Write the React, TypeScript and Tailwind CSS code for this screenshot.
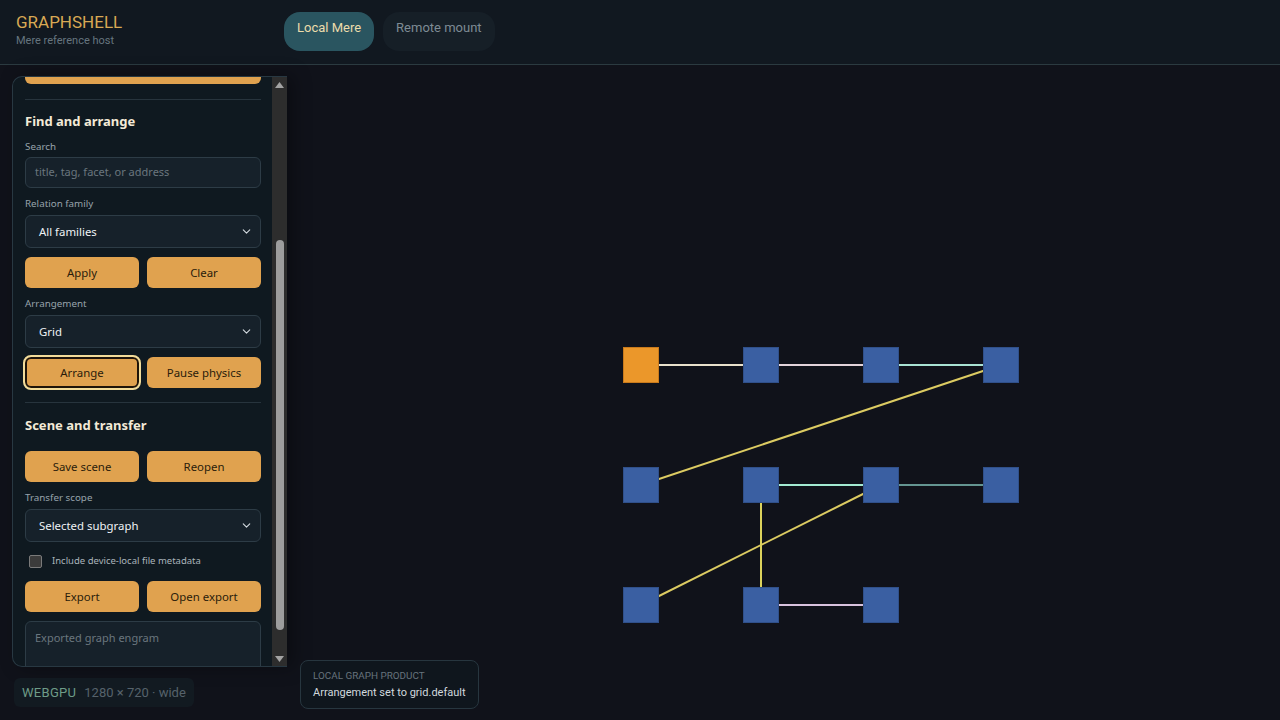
import { ChevronDown } from 'lucide-react';

const COLS = [641, 761, 881, 1001];
const ROWS = [300, 420, 540];

const nodes = [
  { c: 0, r: 0, focus: true },
  { c: 1, r: 0 }, { c: 2, r: 0 }, { c: 3, r: 0 },
  { c: 0, r: 1 }, { c: 1, r: 1 }, { c: 2, r: 1 }, { c: 3, r: 1 },
  { c: 0, r: 2 }, { c: 1, r: 2 }, { c: 2, r: 2 },
];

const edges = [
  { a: [0, 0], b: [1, 0], color: '#e9e1cc', w: 2.2 },
  { a: [1, 0], b: [2, 0], color: '#e3d3da', w: 2 },
  { a: [2, 0], b: [3, 0], color: '#a9e2d3', w: 2 },
  { a: [3, 0], b: [0, 1], color: '#dccb62', w: 2 },
  { a: [1, 1], b: [2, 1], color: '#a3ead2', w: 2.2 },
  { a: [2, 1], b: [3, 1], color: '#80c2ba', w: 1.6 },
  { a: [2, 1], b: [0, 2], color: '#dccb62', w: 2 },
  { a: [1, 1], b: [1, 2], color: '#dcd25c', w: 2 },
  { a: [1, 2], b: [2, 2], color: '#d8c2de', w: 2 },
];

const font = { fontFamily: '"Noto Sans", "Open Sans", sans-serif' };
const roboto = { fontFamily: 'Roboto, "Liberation Sans", sans-serif' };

function OrangeButton({ children, focused }: { children: React.ReactNode; focused?: boolean }) {
  return (
    <button
      className={`h-[31px] flex-1 rounded-[6px] bg-[#e0a24f] text-[11.4px] text-[#2a1c0b] ${
        focused ? 'outline-2 outline-[#f2dc9a] shadow-[inset_0_0_0_2px_#1f150a]' : ''
      }`}
    >
      {children}
    </button>
  );
}

function Label({ children }: { children: React.ReactNode }) {
  return <div className="text-[9.8px] leading-[14px] text-[#97a3ab]">{children}</div>;
}

function Select({ value }: { value: string }) {
  return (
    <div className="mt-1 flex h-[33px] items-center justify-between rounded-[6px] border border-[#2d3c46] bg-[#16212a] pl-[13px] pr-[7px] text-[11.4px] text-[#eef2f4]">
      <span>{value}</span>
      <ChevronDown className="h-[13px] w-[13px] text-[#d3dadf]" strokeWidth={2} />
    </div>
  );
}

function Scrollbar() {
  return (
    <div className="flex w-[15px] shrink-0 flex-col items-center bg-[#2d2d2d]">
      <div className="flex h-[15px] w-full items-center justify-center">
        <svg width="9" height="6" viewBox="0 0 9 6">
          <polygon points="4.5,0 9,6 0,6" fill="#a3a3a3" />
        </svg>
      </div>
      <div className="flex w-full flex-1 flex-col items-center">
        <div className="mt-[148px] h-[390px] w-[8px] rounded-full bg-[#9d9d9d]" />
      </div>
      <div className="flex h-[15px] w-full items-center justify-center">
        <svg width="9" height="6" viewBox="0 0 9 6">
          <polygon points="0,0 9,0 4.5,6" fill="#a3a3a3" />
        </svg>
      </div>
    </div>
  );
}

function Panel() {
  return (
    <div
      className="absolute left-[12px] top-[11px] flex h-[591px] w-[275px] overflow-hidden rounded-l-[10px] border border-r-0 border-[#283842] bg-[#0f1920] shadow-[6px_0_18px_rgba(0,0,0,0.35)]"
      style={font}
    >
      <div className="flex-1 overflow-hidden pl-[12px] pr-[11px]">
        {/* bottom of the button scrolled out above */}
        <div className="h-[7px] rounded-b-[6px] bg-[#e0a24f]" />
        <div className="mt-[15px] h-px bg-[#27343d]" />

        {/* Find and arrange */}
        <div className="flex flex-col gap-[9px] pb-[14px] pt-[11px]">
          <h3 className="text-[13px] font-bold leading-[20px] text-[#f3ead7]">Find and arrange</h3>
          <div>
            <Label>Search</Label>
            <div className="mt-[3px] flex h-[31px] items-center rounded-[6px] border border-[#2d3c46] bg-[#16212a] px-[9px] text-[11px] text-[#6a767e]">
              title, tag, facet, or address
            </div>
          </div>
          <div>
            <Label>Relation family</Label>
            <Select value="All families" />
          </div>
          <div className="flex gap-2">
            <OrangeButton>Apply</OrangeButton>
            <OrangeButton>Clear</OrangeButton>
          </div>
          <div>
            <Label>Arrangement</Label>
            <Select value="Grid" />
          </div>
          <div className="flex gap-2">
            <OrangeButton focused>Arrange</OrangeButton>
            <OrangeButton>Pause physics</OrangeButton>
          </div>
        </div>

        <div className="h-px bg-[#27343d]" />

        {/* Scene and transfer */}
        <div className="flex flex-col gap-[9px] pb-[12px] pt-[12px]">
          <h3 className="text-[13px] font-bold leading-[20px] text-[#f3ead7]">Scene and transfer</h3>
          <div className="mt-[7px] flex gap-2">
            <OrangeButton>Save scene</OrangeButton>
            <OrangeButton>Reopen</OrangeButton>
          </div>
          <div>
            <Label>Transfer scope</Label>
            <Select value="Selected subgraph" />
          </div>
          <div className="flex h-[21px] items-center gap-[10px] pl-[4px]">
            <div className="h-[13px] w-[13px] rounded-[2px] border border-[#7a7a7a] bg-[#3b3b3b]" />
            <span className="text-[9.5px] text-[#aab4bb]">Include device-local file metadata</span>
          </div>
          <div className="flex gap-2">
            <OrangeButton>Export</OrangeButton>
            <OrangeButton>Open export</OrangeButton>
          </div>
          <div className="h-[76px] rounded-[6px] border border-[#2d3c46] bg-[#16212a] px-[9px] pt-[8px] text-[11px] text-[#6a767e]">
            Exported graph engram
          </div>
        </div>
      </div>
      <Scrollbar />
    </div>
  );
}

function GraphCanvas() {
  const pos = (c: number, r: number) => [COLS[c], ROWS[r]];
  return (
    <svg className="absolute left-0 top-0" width={1280} height={655}>
      {edges.map((e, i) => {
        const [x1, y1] = pos(e.a[0], e.a[1]);
        const [x2, y2] = pos(e.b[0], e.b[1]);
        return <line key={i} x1={x1} y1={y1} x2={x2} y2={y2} stroke={e.color} strokeWidth={e.w} />;
      })}
      {nodes.map((n, i) => {
        const [x, y] = pos(n.c, n.r);
        return (
          <rect
            key={i}
            x={x - 17.5}
            y={y - 17.5}
            width={35}
            height={35}
            fill={n.focus ? '#eb972a' : '#3a5fa2'}
            stroke={n.focus ? '#c97a1c' : '#30508a'}
            strokeWidth={1}
          />
        );
      })}
    </svg>
  );
}

export default function App() {
  return (
    <div className="flex h-[720px] w-[1280px] flex-col overflow-hidden bg-[#10121a]" style={roboto}>
      <header className="flex h-[65px] shrink-0 items-start border-b border-[#2b3a40] bg-[#111820]">
        <div className="w-[284px] pl-4 pt-[12px]">
          <div className="text-[17px] leading-[20px] text-[#d8a954]">GRAPHSHELL</div>
          <div className="mt-[2px] text-[11px] leading-[13px] text-[#66757f]">Mere reference host</div>
        </div>
        <nav className="flex gap-[9px] pt-[12px]">
          <button className="h-[39px] rounded-[16px] bg-[#2a5560] px-[13px] pb-[8px] text-[13px] text-[#ecdcab]">
            Local Mere
          </button>
          <button className="h-[39px] rounded-[16px] bg-[#161f27] px-[13px] pb-[8px] text-[13px] text-[#7e8b94]">
            Remote mount
          </button>
        </nav>
      </header>

      <main className="relative flex-1">
        <GraphCanvas />
        <Panel />

        <div className="absolute bottom-[13px] left-[14px] flex h-[29px] items-center gap-[8px] rounded-[6px] bg-[#121a21] px-[8px] text-[13px]">
          <span className="tracking-[0.3px] text-[#6e9c88]">WEBGPU</span>
          <span className="text-[#56626b]">1280 × 720 · wide</span>
        </div>

        <div className="absolute left-[300px] top-[595px] rounded-[8px] border border-[#27363f] bg-[#0f161d] px-[12px] pb-[8px] pt-[8px]">
          <div className="text-[9.9px] uppercase leading-[13px] text-[#67737c]">Local graph product</div>
          <div className="mt-[3px] text-[11px] leading-[15px] text-[#d1d9dd]">Arrangement set to grid.default</div>
        </div>
      </main>
    </div>
  );
}
